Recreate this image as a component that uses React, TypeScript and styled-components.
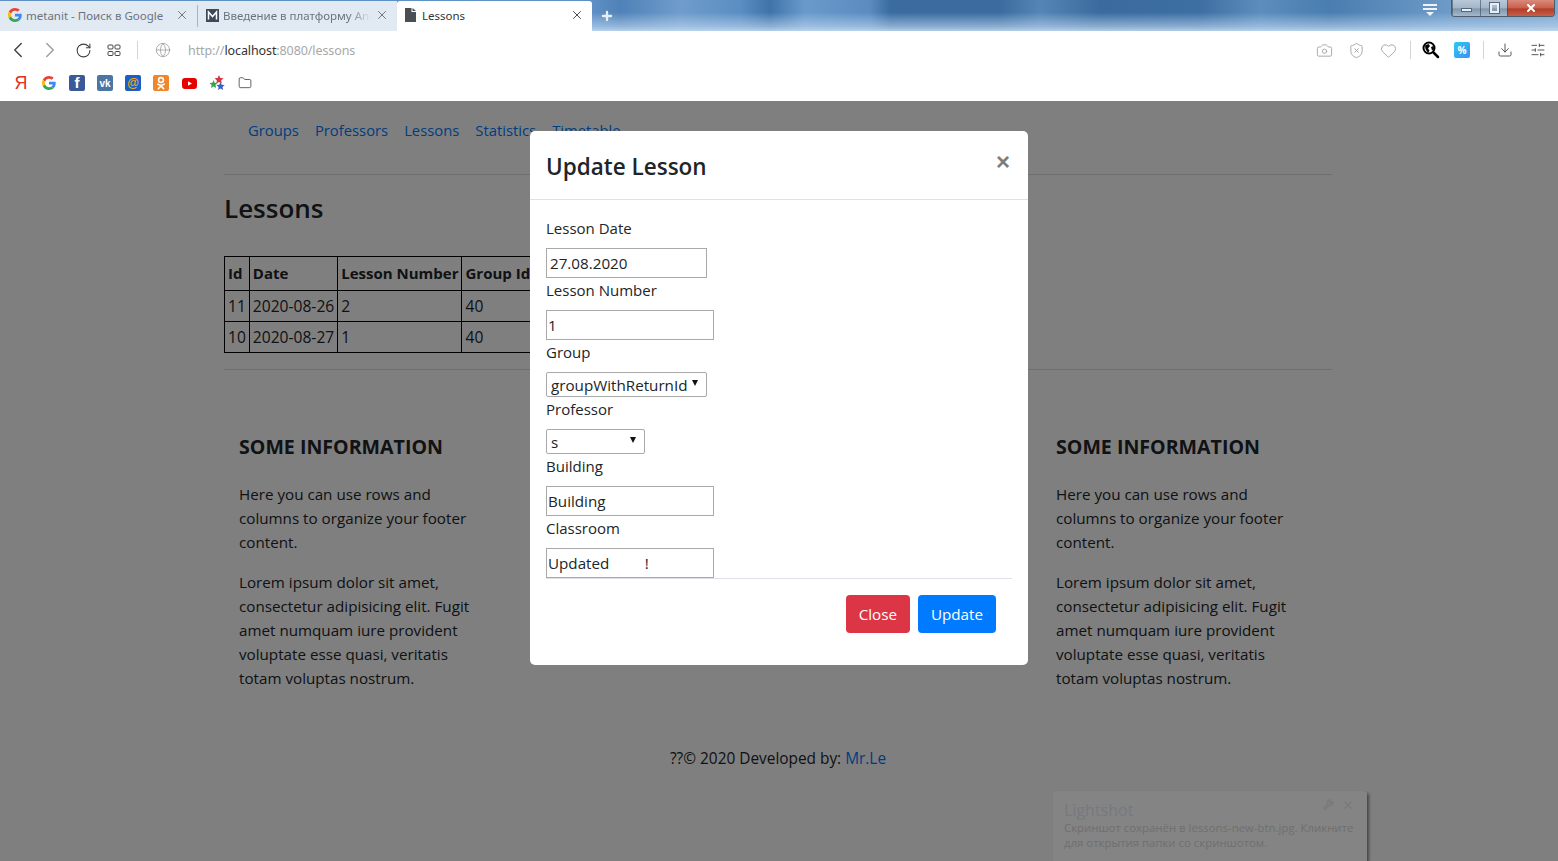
import React from "react";
import styled, { createGlobalStyle } from "styled-components";
import { ChevronLeft, ChevronRight, RotateCw, Globe, Camera, ShieldX, Heart, Download, SlidersHorizontal, X, Folder, Plus, Wrench } from "lucide-react";

const Global = createGlobalStyle`
  html, body { margin: 0; padding: 0; height: 100%; overflow: hidden; }
  body { font-family: "Open Sans", "Noto Sans", sans-serif; background: #fff; color: #212529; }
  * { box-sizing: border-box; }
  svg { flex-shrink: 0; }
`;

const Screen = styled.div`
  width: 1558px;
  height: 861px;
  display: flex;
  flex-direction: column;
  overflow: hidden;
`;

const TabStrip = styled.div`
  height: 31px;
  display: flex;
  align-items: flex-end;
  background:
    linear-gradient(rgba(190, 215, 240, 0) 40%, rgba(190, 215, 240, 0.6) 85%, rgba(200, 222, 242, 0.85) 100%),
    linear-gradient(
      90deg,
      #5f90c4 0 592px,
      #4f82b8 620px,
      #6f9ccb 680px,
      #5b8ec2 740px,
      #3f74aa 770px,
      #6a9acb 805px,
      #5a8cc0 870px,
      #3a6ca0 890px,
      #3b6c9f 1000px,
      #5585b6 1040px,
      #3a6b9e 1100px,
      #3d6fa3 1200px,
      #5b8dbd 1260px,
      #4a7db0 1330px,
      #6d9bc8 1450px,
      #7fa8cf 1558px
    );
`;

const TabItem = styled.div<{ $active?: boolean; $w: number }>`
  width: ${(p) => p.$w}px;
  height: 30px;
  display: flex;
  align-items: center;
  padding: 0 8px 2px;
  gap: ${(p) => (p.$active ? 6 : 4)}px;
  font-size: 11.5px;
  color: ${(p) => (p.$active ? "#333" : "#6a7480")};
  background: ${(p) => (p.$active ? "#fff" : "#e1e9f2")};
  white-space: nowrap;
  border-radius: ${(p) => (p.$active ? "3px 3px 0 0" : "0")};
`;

const TabTitle = styled.span<{ $fade?: boolean }>`
  flex: 1;
  overflow: hidden;
  font-family: "Noto Sans", sans-serif;
  ${(p) => p.$fade && "mask-image: linear-gradient(90deg, #000 85%, transparent 100%);"}
`;

const TabGap = styled.div`
  width: 1px;
  height: 30px;
  padding: 4px 0;
  background: #e1e9f2;
`;

const TabDivider = styled.div`
  width: 1px;
  height: 100%;
  background: #a9b4bf;
`;

const NewTab = styled.div`
  width: 30px;
  height: 30px;
  display: flex;
  align-items: center;
  justify-content: center;
  color: #e6eef6;
`;

const StripEnd = styled.div`
  margin-left: auto;
  display: flex;
  align-items: flex-start;
  align-self: flex-start;
  padding-right: 3px;
`;

const MenuBars = styled.div`
  width: 14px;
  margin: 4px 14px 0 0;
  display: flex;
  flex-direction: column;
  gap: 2px;
  align-items: center;
`;

const MenuBar = styled.span`
  display: block;
  width: 14px;
  height: 2px;
  background: #eef3f8;
`;

const MenuArrow = styled.span`
  width: 0;
  height: 0;
  border-left: 4px solid transparent;
  border-right: 4px solid transparent;
  border-top: 4px solid #eef3f8;
`;

const WinControls = styled.div`
  display: flex;
  height: 17px;
  border: 1px solid #4d5c6c;
  border-top: 0;
  border-radius: 0 0 4px 4px;
  overflow: hidden;
`;

const WinBtn = styled.div<{ $w: number; $close?: boolean }>`
  width: ${(p) => p.$w}px;
  display: flex;
  align-items: center;
  justify-content: center;
  border-left: 1px solid rgba(40, 55, 70, 0.5);
  color: #fff;
  background: ${(p) =>
    p.$close
      ? "linear-gradient(#d9897a, #c9604c 50%, #b23c28 55%, #c75f48)"
      : "linear-gradient(#b8c8d8, #a3b6c9 50%, #7f97ae 55%, #a5b8ca)"};
`;

const MinGlyph = styled.span`
  width: 11px;
  height: 4px;
  margin-top: 4px;
  background: #e8eef4;
  border: 1px solid #56687a;
`;

const MaxGlyph = styled.span`
  width: 9px;
  height: 10px;
  border: 2px solid #e8eef4;
  outline: 1px solid #56687a;
`;

const Toolbar = styled.div`
  height: 37px;
  display: flex;
  align-items: center;
  padding: 1px 8px 0 6px;
  background: #fff;
`;

const ToolGroup = styled.div<{ $end?: boolean }>`
  display: flex;
  align-items: center;
  color: #444;
  ${(p) => p.$end && "margin-left: auto;"}
`;

const ToolSlot = styled.span<{ $w: number; $muted?: boolean }>`
  width: ${(p) => p.$w}px;
  display: flex;
  align-items: center;
  justify-content: center;
  color: ${(p) => (p.$muted ? "#9c9c9c" : "#3f3f3f")};
`;

const ToolSep = styled.span<{ $ml: number; $mr: number }>`
  width: 1px;
  height: 18px;
  margin: 0 ${(p) => p.$mr}px 0 ${(p) => p.$ml}px;
  background: #d5d5d5;
`;

const Address = styled.div`
  font-size: 12.5px;
  color: #a8a8a8;
  font-family: "Noto Sans", sans-serif;
  letter-spacing: -0.1px;
`;

const Host = styled.span`
  color: #333;
`;

const Percent = styled.div`
  width: 16px;
  height: 16px;
  border-radius: 2px;
  background: linear-gradient(135deg, #2fc7f5, #3a92f2);
  color: #fff;
  font-size: 10px;
  font-weight: 700;
  display: flex;
  align-items: center;
  justify-content: center;
`;

const Bookmarks = styled.div`
  height: 33px;
  display: flex;
  align-items: center;
  gap: 12px;
  padding: 0 0 3px 13px;
  background: #fff;
`;

const Mark = styled.div<{ $bg?: string; $color?: string; $size?: number }>`
  width: 16px;
  height: 16px;
  border-radius: 2px;
  display: flex;
  align-items: center;
  justify-content: center;
  font-size: ${(p) => p.$size || 12}px;
  font-weight: 700;
  color: ${(p) => p.$color || "#fff"};
  background: ${(p) => p.$bg || "transparent"};
  font-family: "Liberation Sans", sans-serif;
`;

const YandexMark = styled(Mark)`
  font-weight: 400;
`;

const FacebookMark = styled(Mark)`
  align-items: flex-end;
`;

const Viewport = styled.div`
  flex: 1;
  position: relative;
  overflow: hidden;
  background: #fff;
`;

const Container = styled.div`
  width: 1108px;
  margin-left: 224px;
`;

const Nav = styled.nav`
  height: 74px;
  padding: 17px 0 0 24px;
  display: flex;
  gap: 16px;
  border-bottom: 1px solid #dcdcdc;
`;

const NavLink = styled.a`
  color: #007bff;
  font-size: 14.8px;
  line-height: 24px;
`;

const Heading = styled.h2`
  margin: 15px 0 30px;
  font-size: 26px;
  line-height: 36px;
  font-weight: 600;
  color: #212529;
`;

const Table = styled.table`
  border-collapse: collapse;
  line-height: 24px;
`;

const Th = styled.th`
  border: 1px solid #000;
  padding: 4px 3px 5px 3px;
  font-size: 15px;
  text-align: left;
  font-weight: 700;
  white-space: nowrap;
`;

const Td = styled.td`
  border: 1px solid #000;
  padding: 3px 3px 3px 3px;
  font-size: 15.6px;
  white-space: nowrap;
`;

const Rule = styled.hr`
  margin: 16px 0 0;
  border: 0;
  border-top: 1px solid #dcdcdc;
`;

const FooterCols = styled.div`
  display: flex;
  justify-content: space-between;
  padding: 64px 36px 0 15px;
`;

const FooterCol = styled.section`
  width: 240px;
`;

const FooterTitle = styled.h5`
  margin: 0 0 22px;
  font-size: 19.6px;
  line-height: 26px;
  font-weight: 700;
  white-space: nowrap;
`;

const FooterText = styled.p`
  margin: 0 0 16px;
  font-size: 15.2px;
  line-height: 24px;
`;

const Copyright = styled.div`
  margin-top: 41px;
  text-align: center;
  font-size: 15.4px;
  line-height: 24px;
`;

const CopyLink = styled.a`
  color: #007bff;
`;

const Backdrop = styled.div`
  position: absolute;
  inset: 0;
  background: rgba(0, 0, 0, 0.5);
`;

const Toast = styled.div`
  position: absolute;
  left: 1053px;
  top: 690px;
  width: 314px;
  height: 70px;
  padding: 10px 11px;
  border-radius: 3px 3px 0 0;
  background: rgba(255, 255, 255, 0.04);
  box-shadow: 2px 2px 3px rgba(0, 0, 0, 0.45);
  color: #6f6f6f;
  font-size: 11.4px;
  line-height: 15px;
  white-space: nowrap;
`;

const ToastTitle = styled.div`
  font-size: 16px;
  line-height: 19px;
  color: #76797e;
`;

const ToastTools = styled.div`
  position: absolute;
  top: 8px;
  right: 13px;
  display: flex;
  gap: 8px;
  color: #7a7a7a;
`;

const Modal = styled.div`
  position: absolute;
  left: 530px;
  top: 30px;
  width: 498px;
  height: 534px;
  display: flex;
  flex-direction: column;
  background: #fff;
  border-radius: 5px;
`;

const ModalHeader = styled.header`
  height: 70px;
  padding: 3px 18px 0 16px;
  display: flex;
  align-items: center;
  justify-content: space-between;
  border-bottom: 1px solid #dee2e6;
`;

const ModalTitle = styled.h5`
  margin: 0;
  font-size: 22.5px;
  font-weight: 600;
  line-height: 36px;
  color: #212529;
`;

const CloseX = styled.span`
  font-size: 24px;
  line-height: 24px;
  font-weight: 700;
  color: #7d7d7d;
  margin: 0 0 10px;
  font-family: "Liberation Sans", sans-serif;
`;

const ModalBody = styled.div`
  flex: 1;
  padding: 16px 16px 0;
`;

const Form = styled.form`
  display: flex;
  flex-direction: column;
  align-items: flex-start;
  border-bottom: 1px solid #dee2e6;
`;

const Label = styled.label`
  font-size: 15px;
  line-height: 24px;
  margin-bottom: 8px;
  color: #212529;
`;

const Input = styled.input<{ $w: number }>`
  width: ${(p) => p.$w}px;
  height: 30px;
  padding: 0 1px 0 ${(p) => (p.$w > 165 ? 1 : 3)}px;
  border: 1px solid #a9a9a9;
  font: inherit;
  font-size: 15.2px;
  color: #212529;
  background: #fff;
  outline: none;
`;

const SelectWrap = styled.div<{ $w: number }>`
  position: relative;
  width: ${(p) => p.$w}px;
  height: 25px;
  &::after {
    content: "";
    position: absolute;
    top: 8px;
    right: 9px;
    border-left: 3.5px solid transparent;
    border-right: 3.5px solid transparent;
    border-top: 6px solid #111;
  }
`;

const Select = styled.select`
  appearance: none;
  display: block;
  width: 100%;
  height: 100%;
  padding: 1px 0 0 4px;
  border: 1px solid #a9a9a9;
  border-radius: 2px;
  background: #fff;
  font: inherit;
  font-size: 15.2px;
  color: #212529;
`;

const ModalFooter = styled.footer`
  height: 87px;
  padding: 16px 32px 0 16px;
  display: flex;
  justify-content: flex-end;
  align-items: flex-start;
  gap: 8px;
`;

const Btn = styled.button<{ $bg: string }>`
  height: 38px;
  padding: 0 13px;
  border: 0;
  border-radius: 4px;
  background: ${(p) => p.$bg};
  color: #fff;
  font: inherit;
  font-size: 15.2px;
`;

const rows = [
  { id: 11, date: "2020-08-26", num: 2, group: 40 },
  { id: 10, date: "2020-08-27", num: 1, group: 40 },
];

const Info = () => (
  <FooterCol>
    <FooterTitle>SOME INFORMATION</FooterTitle>
    <FooterText>Here you can use rows and columns to organize your footer content.</FooterText>
    <FooterText>
      Lorem ipsum dolor sit amet, consectetur adipisicing elit. Fugit amet numquam iure provident voluptate esse quasi,
      veritatis totam voluptas nostrum.
    </FooterText>
  </FooterCol>
);

const GoogleG = () => (
  <svg width="14" height="14" viewBox="0 0 48 48">
    <path fill="#EA4335" d="M24 9.5c3.5 0 6.7 1.2 9.2 3.6l6.9-6.9C35.9 2.4 30.5 0 24 0 14.6 0 6.5 5.4 2.6 13.2l8 6.2C12.5 13.6 17.8 9.5 24 9.5z" />
    <path fill="#4285F4" d="M47 24.5c0-1.6-.1-3.1-.4-4.5H24v9h12.9c-.6 3-2.2 5.5-4.7 7.2l7.7 6C44.4 37.9 47 31.8 47 24.5z" />
    <path fill="#FBBC05" d="M10.6 28.6a14.5 14.5 0 0 1 0-9.2l-8-6.2a24 24 0 0 0 0 21.6l8-6.2z" />
    <path fill="#34A853" d="M24 48c6.5 0 11.9-2.1 15.9-5.8l-7.7-6c-2.2 1.5-4.9 2.3-8.2 2.3-6.2 0-11.5-4.1-13.4-9.9l-8 6.2C6.5 42.6 14.6 48 24 48z" />
  </svg>
);

const DocIcon = () => (
  <svg width="11" height="14" viewBox="0 0 11 14">
    <path fill="#4a4f55" d="M0 0h6.5v4H11v10H0z" />
    <path fill="#4a4f55" d="M7.5 0 11 3H7.5z" />
  </svg>
);

const GmailM = () => (
  <svg width="13" height="13" viewBox="0 0 13 13">
    <rect width="13" height="13" fill="#3a4a5c" />
    <path d="M2.5 10.5V3l4 4.5 4-4.5v7.5" fill="none" stroke="#fff" strokeWidth="1.5" />
  </svg>
);

const SpeedDial = () => (
  <svg width="14" height="13" viewBox="0 0 14 13" fill="none" stroke="#444" strokeWidth="1">
    <rect x="1" y="1" width="5" height="4" rx="1" />
    <rect x="8" y="1" width="5" height="4" rx="1" />
    <rect x="1" y="7.5" width="5" height="4" rx="1" />
    <rect x="8" y="7.5" width="5" height="4" rx="1" />
  </svg>
);

const GlobeSearch = () => (
  <svg width="18" height="18" viewBox="0 0 18 18">
    <circle cx="7" cy="7" r="5.5" fill="#fff" stroke="#000" strokeWidth="2" />
    <path fill="#000" d="M3 4.5 6.5 3 8 5 6 7.5l1.5 2L6 12 3.5 8zM9 6l2.5-1 .5 3-2 1.5z" />
    <path stroke="#000" strokeWidth="2.5" strokeLinecap="round" d="M11.5 11.5 16 16" />
  </svg>
);

const OkIcon = () => (
  <svg width="16" height="16" viewBox="0 0 16 16" fill="none" stroke="#fff" strokeWidth="1.6" strokeLinecap="round">
    <circle cx="8" cy="5" r="2.4" />
    <path d="M4.8 9.2c2 1.3 4.4 1.3 6.4 0M8 10.5v1M8 11l-2.6 2.6M8 11l2.6 2.6" />
  </svg>
);

const Stars = () => (
  <svg width="17" height="17" viewBox="0 0 17 17">
    <path fill="#d9333f" d="M10 0l1.3 3 3.2.3-2.4 2.1.7 3.1L10 7 7.2 8.5l.7-3.1-2.4-2.1 3.2-.3z" />
    <path fill="#2fa84f" d="M4.5 5l1.2 2.7 3 .3-2.2 2 .6 3-2.6-1.5L2 13l.6-3L.4 8l3-.3z" />
    <path fill="#3a5fc8" d="M11.5 7l1.2 2.7 3 .3-2.2 2 .6 3-2.6-1.5L9 15l.6-3-2.2-2 3-.3z" />
  </svg>
);

export default function App() {
  return (
    <Screen>
      <Global />
      <TabStrip>
        <TabItem $w={197}>
          <GoogleG />
          <TabTitle>metanit - Поиск в Google</TabTitle>
          <X size={14} strokeWidth={1.5} color="#666" />
        </TabItem>
        <TabGap>
          <TabDivider />
        </TabGap>
        <TabItem $w={199}>
          <GmailM />
          <TabTitle $fade>Введение в платформу Angular</TabTitle>
          <X size={14} strokeWidth={1.5} color="#666" />
        </TabItem>
        <TabItem $w={195} $active>
          <DocIcon />
          <TabTitle>Lessons</TabTitle>
          <X size={14} strokeWidth={1.5} color="#333" />
        </TabItem>
        <NewTab>
          <Plus size={14} strokeWidth={4} />
        </NewTab>
        <StripEnd>
          <MenuBars>
            <MenuBar />
            <MenuBar />
            <MenuArrow />
          </MenuBars>
          <WinControls>
            <WinBtn $w={28}>
              <MinGlyph />
            </WinBtn>
            <WinBtn $w={27}>
              <MaxGlyph />
            </WinBtn>
            <WinBtn $w={47} $close>
              <X size={12} strokeWidth={4} />
            </WinBtn>
          </WinControls>
        </StripEnd>
      </TabStrip>

      <Toolbar>
        <ToolGroup>
          <ToolSlot $w={24}>
            <ChevronLeft size={26} strokeWidth={1.3} />
          </ToolSlot>
          <ToolSlot $w={40} $muted>
            <ChevronRight size={26} strokeWidth={1.3} />
          </ToolSlot>
          <ToolSlot $w={26}>
            <RotateCw size={17} strokeWidth={1.5} />
          </ToolSlot>
          <ToolSlot $w={36}>
            <SpeedDial />
          </ToolSlot>
          <ToolSep $ml={5} $mr={0} />
          <ToolSlot $w={50} $muted>
            <Globe size={16} strokeWidth={1.2} />
          </ToolSlot>
        </ToolGroup>
        <Address>
          http://<Host>localhost</Host>:8080/lessons
        </Address>
        <ToolGroup $end>
          <ToolSlot $w={32} $muted>
            <Camera size={17} strokeWidth={1.2} />
          </ToolSlot>
          <ToolSlot $w={32} $muted>
            <ShieldX size={17} strokeWidth={1.2} />
          </ToolSlot>
          <ToolSlot $w={32} $muted>
            <Heart size={17} strokeWidth={1.2} />
          </ToolSlot>
          <ToolSep $ml={6} $mr={10} />
          <ToolSlot $w={20}>
            <GlobeSearch />
          </ToolSlot>
          <ToolSlot $w={42}>
            <Percent>%</Percent>
          </ToolSlot>
          <ToolSep $ml={0} $mr={0} />
          <ToolSlot $w={42}>
            <Download size={16} strokeWidth={1.3} />
          </ToolSlot>
          <ToolSlot $w={24}>
            <SlidersHorizontal size={16} strokeWidth={1.3} />
          </ToolSlot>
        </ToolGroup>
      </Toolbar>

      <Bookmarks>
        <YandexMark $color="#e2321d" $size={18}>Я</YandexMark>
        <Mark>
          <GoogleG />
        </Mark>
        <FacebookMark $bg="#3b5998" $size={15}>f</FacebookMark>
        <Mark $bg="#4c75a3" $size={10}>vk</Mark>
        <Mark $bg="#1a5fc4" $color="#f5a623">@</Mark>
        <Mark $bg="#f0862a">
          <OkIcon />
        </Mark>
        <Mark>
          <svg width="15" height="11" viewBox="0 0 15 11">
            <rect width="15" height="11" rx="3" fill="#e60000" />
            <path d="M6 3.2 10 5.5 6 7.8z" fill="#fff" />
          </svg>
        </Mark>
        <Mark>
          <Stars />
        </Mark>
        <Mark $color="#333">
          <Folder size={14} strokeWidth={1.3} />
        </Mark>
      </Bookmarks>

      <Viewport>
        <Container>
          <Nav>
            <NavLink>Groups</NavLink>
            <NavLink>Professors</NavLink>
            <NavLink>Lessons</NavLink>
            <NavLink>Statistics</NavLink>
            <NavLink>Timetable</NavLink>
          </Nav>
          <Heading>Lessons</Heading>
          <Table>
            <thead>
              <tr>
                <Th>Id</Th>
                <Th>Date</Th>
                <Th>Lesson Number</Th>
                <Th>Group Id</Th>
              </tr>
            </thead>
            <tbody>
              {rows.map((r) => (
                <tr key={r.id}>
                  <Td>{r.id}</Td>
                  <Td>{r.date}</Td>
                  <Td>{r.num}</Td>
                  <Td>{r.group}</Td>
                </tr>
              ))}
            </tbody>
          </Table>
          <Rule />
          <FooterCols>
            <Info />
            <Info />
          </FooterCols>
          <Copyright>
            ??© 2020 Developed by: <CopyLink>Mr.Le</CopyLink>
          </Copyright>
        </Container>

        <Backdrop />

        <Toast>
          <ToastTitle>Lightshot</ToastTitle>
          Скриншот сохранён в lessons-new-btn.jpg. Кликните
          <br />
          для открытия папки со скриншотом.
          <ToastTools>
            <Wrench size={11} strokeWidth={3} />
            <X size={12} strokeWidth={3} />
          </ToastTools>
        </Toast>

        <Modal>
          <ModalHeader>
            <ModalTitle>Update Lesson</ModalTitle>
            <CloseX>×</CloseX>
          </ModalHeader>
          <ModalBody>
            <Form>
              <Label>Lesson Date</Label>
              <Input $w={161} readOnly value="27.08.2020" />
              <Label>Lesson Number</Label>
              <Input $w={168} readOnly value="1" />
              <Label>Group</Label>
              <SelectWrap $w={161}>
                <Select defaultValue="groupWithReturnId">
                  <option>groupWithReturnId</option>
                </Select>
              </SelectWrap>
              <Label>Professor</Label>
              <SelectWrap $w={99}>
                <Select defaultValue="s">
                  <option>s</option>
                </Select>
              </SelectWrap>
              <Label>Building</Label>
              <Input $w={168} readOnly value="Building" />
              <Label>Classroom</Label>
              <Input $w={168} readOnly value="Updated         !" />
            </Form>
          </ModalBody>
          <ModalFooter>
            <Btn $bg="#dc3545">Close</Btn>
            <Btn $bg="#007bff">Update</Btn>
          </ModalFooter>
        </Modal>
      </Viewport>
    </Screen>
  );
}
